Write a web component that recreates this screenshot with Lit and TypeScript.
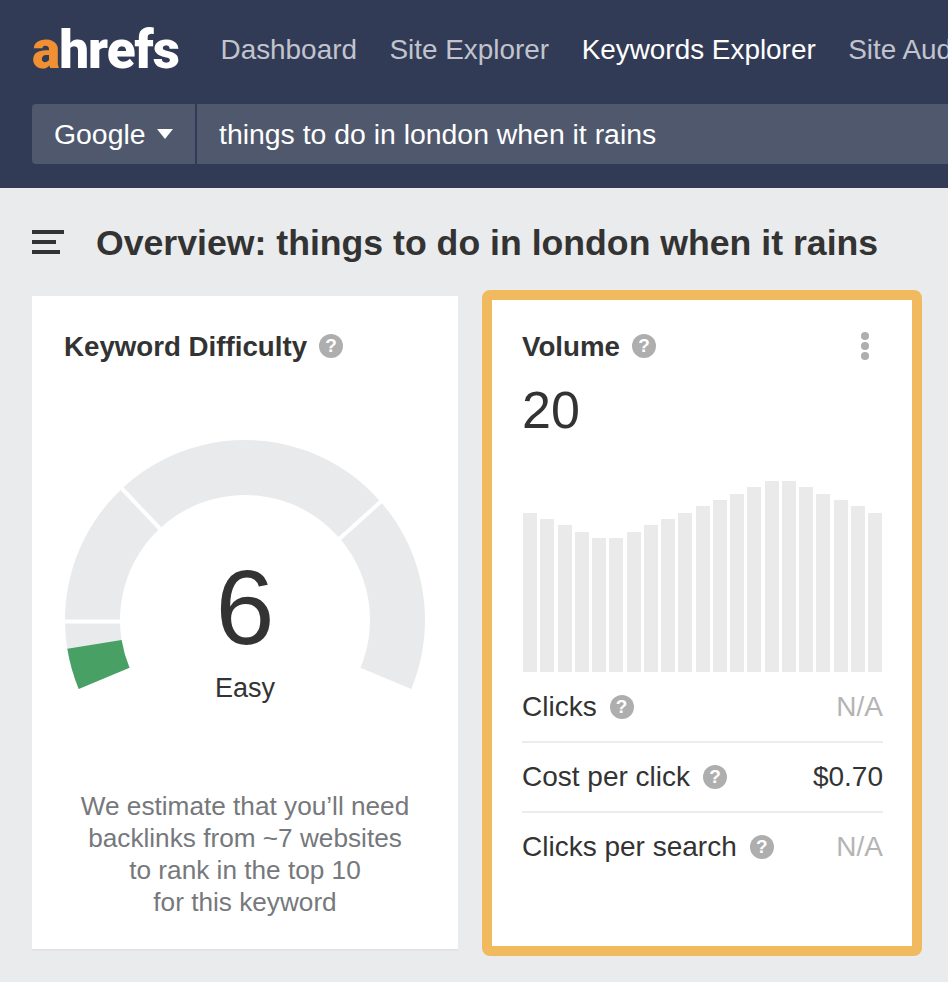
import { LitElement, html, css, svg } from "lit";
import { customElement } from "lit/decorators.js";

const CX = 180, CY = 180, R = 180, r = 125;
const pt = (deg: number, rad: number) => {
  const a = (deg * Math.PI) / 180;
  return `${(CX - rad * Math.cos(a)).toFixed(2)} ${(CY - rad * Math.sin(a)).toFixed(2)}`;
};
const seg = (a: number, b: number) => {
  const large = b - a > 180 ? 1 : 0;
  return `M${pt(a, R)} A${R} ${R} 0 ${large} 1 ${pt(b, R)} L${pt(b, r)} A${r} ${r} 0 ${large} 0 ${pt(a, r)} Z`;
};
const TOPS = [697, 717, 735, 755, 774, 774, 755, 735, 717, 697, 678, 659, 640, 621, 602, 602, 621, 640, 659, 678, 697];
const BAR_HEIGHTS = TOPS.map((t) => (1175 - t) / 3);

@customElement("app-root")
export class AppRoot extends LitElement {
  static styles = css`
    :host {
      display: block;
      width: 948px;
      height: 982px;
      overflow: hidden;
      background: #eaebed;
      font-family: "Liberation Sans", Arial, sans-serif;
      color: #333333;
    }
    .top {
      height: 188px;
      background: #323b55;
      box-sizing: border-box;
      padding: 0 0 24px 32px;
      overflow: hidden;
      display: flex;
      flex-direction: column;
      justify-content: flex-end;
      gap: 29px;
    }
    .nav {
      display: flex;
      align-items: center;
      white-space: nowrap;
      height: 50px;
    }
    .logo {
      width: 188.5px;
      flex: none;
      font-family: Roboto, "Liberation Sans", sans-serif;
      font-size: 53px;
      font-weight: 900;
      letter-spacing: -1px;
      color: #ffffff;
      line-height: 50px;
    }
    .logo span {
      color: #f18f33;
    }
    .links {
      display: flex;
      gap: 32.5px;
      font-size: 27.9px;
      color: #c1c4ce;
    }
    .links .on {
      color: #ffffff;
    }
    .search {
      display: flex;
      height: 60px;
      gap: 2px;
      font-size: 28.4px;
      color: #ffffff;
      white-space: nowrap;
    }
    .engine {
      flex: none;
      width: 163px;
      box-sizing: border-box;
      padding-left: 22px;
      display: flex;
      align-items: center;
      gap: 11px;
      background: #4f586d;
      border-radius: 4px 0 0 4px;
    }
    .caret {
      width: 16px;
      height: 10px;
    }
    .query {
      flex: 1;
      background: #4f586d;
      padding-left: 22px;
      display: flex;
      align-items: center;
    }
    .head {
      display: flex;
      align-items: center;
      gap: 32px;
      height: 102px;
      padding: 6px 0 0 32px;
      box-sizing: border-box;
    }
    .burger {
      display: flex;
      flex-direction: column;
      gap: 6px;
      width: 32px;
    }
    .burger i {
      display: block;
      height: 4px;
      background: #333333;
    }
    .burger i:nth-child(2) {
      width: 24px;
    }
    .burger i:nth-child(3) {
      width: 28px;
    }
    h1 {
      margin: 2px 0 0;
      font-size: 35.65px;
      font-weight: 700;
      color: #333333;
      white-space: nowrap;
    }
    .cards {
      display: grid;
      grid-template-columns: 426px 440px;
      column-gap: 24px;
      align-items: center;
      padding-left: 32px;
    }
    .card {
      background: #ffffff;
      box-sizing: border-box;
    }
    .kd {
      height: 655px;
      padding: 33px 0 0 32px;
      border-bottom: 2px solid #e2e3e6;
    }
    .title {
      display: flex;
      align-items: center;
      gap: 12px;
      font-size: 27.7px;
      font-weight: 700;
      line-height: 36px;
      height: 36px;
    }
    .help {
      flex: none;
      width: 24px;
      height: 24px;
      border-radius: 50%;
      background: #aeaeae;
      color: #ffffff;
      font-size: 19px;
      font-weight: 700;
      line-height: 24px;
      text-align: center;
      margin-bottom: 2px;
    }
    .row .help {
      margin-bottom: 0;
    }
    .gauge {
      display: grid;
      width: 360px;
      margin: 75px 0 0 1px;
      justify-items: center;
    }
    .gauge > * {
      grid-area: 1 / 1;
    }
    .gauge svg {
      width: 360px;
      height: 252px;
      display: block;
    }
    .score {
      display: flex;
      flex-direction: column;
      align-items: center;
      padding-top: 115px;
    }
    .num {
      font-size: 106px;
      line-height: 104px;
    }
    .label {
      font-size: 27px;
      line-height: 32px;
      margin-top: 13px;
    }
    .note {
      margin: 86px 0 0 -32px;
      text-align: center;
      font-size: 26.2px;
      line-height: 32px;
      color: #76787c;
    }
    .vol {
      height: 666px;
      border: 10px solid #f2ba5f;
      border-radius: 8px;
      padding: 29px 29px 0 30px;
      background-clip: padding-box;
    }
    .vol-head {
      display: flex;
      justify-content: space-between;
      align-items: center;
    }
    .dots {
      display: flex;
      flex-direction: column;
      gap: 2px;
      margin: 0 14px 2px 0;
    }
    .dots i {
      display: block;
      width: 8px;
      height: 8px;
      border-radius: 50%;
      background: #aeaeae;
    }
    .big {
      font-size: 52px;
      line-height: 60px;
      margin-top: 15px;
    }
    .bars {
      display: flex;
      align-items: flex-end;
      justify-content: space-between;
      height: 192px;
      margin: 40px 1px 1px 1px;
    }
    .bars i {
      display: block;
      width: 14px;
      background: #eaeaea;
    }
    .row {
      display: flex;
      justify-content: space-between;
      align-items: center;
      height: 68px;
      font-size: 28px;
      border-bottom: 2px solid #ebecee;
    }
    .row:last-child {
      border-bottom: none;
    }
    .row .name {
      display: flex;
      align-items: center;
      gap: 13px;
    }
    .na {
      color: #b4b4b4;
    }
  `;

  private help() {
    return html`<span class="help">?</span>`;
  }

  render() {
    return html`
      <div class="top">
        <div class="nav">
          <div class="logo"><span>a</span>hrefs</div>
          <div class="links">
            <span>Dashboard</span>
            <span>Site Explorer</span>
            <span class="on">Keywords Explorer</span>
            <span>Site Audit</span>
          </div>
        </div>
        <div class="search">
          <div class="engine">
            Google
            <svg class="caret" viewBox="0 0 16 10"><path d="M0 0H16L8 10Z" fill="#fff"></path></svg>
          </div>
          <div class="query">things to do in london when it rains</div>
        </div>
      </div>
      <div class="head">
        <div class="burger"><i></i><i></i><i></i></div>
        <h1>Overview: things to do in london when it rains</h1>
      </div>
      <div class="cards">
        <div class="card kd">
          <div class="title">Keyword Difficulty ${this.help()}</div>
          <div class="gauge">
            <svg viewBox="0 0 360 252">
              ${svg`
                <path d=${seg(-22.5, 202.5)} fill="#e9eaec"></path>
                <path d=${seg(-22.5, -9.2)} fill="#49a064"></path>
                <g stroke="#fff" stroke-width="4">
                  <line x1="-5" y1="181.5" x2="60" y2="181.5"></line>
                  <line x1="54" y1="45.5" x2="100" y2="94"></line>
                  <line x1="322" y1="56" x2="272" y2="101"></line>
                </g>
              `}
            </svg>
            <div class="score">
              <div class="num">6</div>
              <div class="label">Easy</div>
            </div>
          </div>
          <div class="note">
            We estimate that you’ll need<br />backlinks from ~7 websites<br />to rank in the top 10<br />for this keyword
          </div>
        </div>
        <div class="card vol">
          <div class="vol-head">
            <div class="title">Volume ${this.help()}</div>
            <div class="dots"><i></i><i></i><i></i></div>
          </div>
          <div class="big">20</div>
          <div class="bars">
            ${BAR_HEIGHTS.map((h) => html`<i style="height:${h}px"></i>`)}
          </div>
          <div class="rows">
            <div class="row"><span class="name">Clicks ${this.help()}</span><span class="na">N/A</span></div>
            <div class="row"><span class="name">Cost per click ${this.help()}</span><span>$0.70</span></div>
            <div class="row"><span class="name">Clicks per search ${this.help()}</span><span class="na">N/A</span></div>
          </div>
        </div>
      </div>
    `;
  }
}
